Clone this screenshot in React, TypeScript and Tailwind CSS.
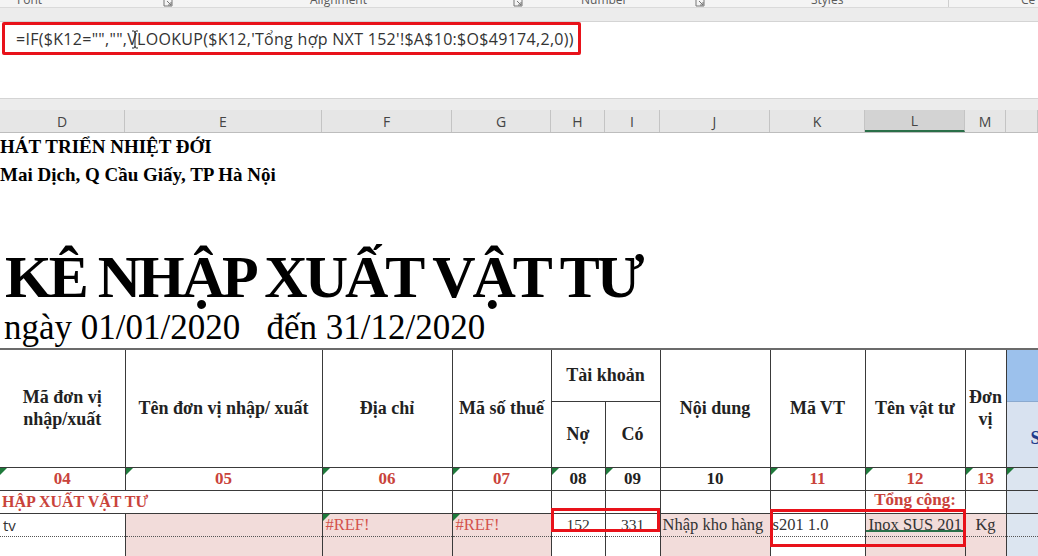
import React from "react";

const serif = "font-['Liberation_Serif',serif]";
const sans = "font-['Open_Sans',sans-serif]";
const vr = "border-r border-r-[#3a3a3a]";
const pink = "bg-[#f2dcda]";
const blueg = "bg-[#dce5f0]";
const dot = "border-b border-dotted border-b-[#555]";
const solidB = "border-b border-b-[#3a3a3a]";

function Tri() {
  return (
    <span className="absolute left-0 top-0 w-0 h-0 border-t-[7px] border-t-[#1e7a3b] border-r-[7px] border-r-transparent" />
  );
}

function Launcher() {
  return (
    <svg width="10" height="10" viewBox="0 0 10 10" className="inline-block">
      <path d="M1 1 H9 V9 H1 Z" fill="none" stroke="#777" strokeWidth="1" />
      <path d="M4 4 L8 8 M8 5 V8 H5" fill="none" stroke="#777" strokeWidth="1" />
    </svg>
  );
}

export default function App() {
  const colHead: [string, string, string][] = [
    ["D", "w-[125px]", ""],
    ["E", "w-[197px]", ""],
    ["F", "w-[130px]", ""],
    ["G", "w-[99px]", ""],
    ["H", "w-[54px]", ""],
    ["I", "w-[55px]", ""],
    ["J", "w-[110px]", ""],
    ["K", "w-[95px]", ""],
    ["L", "w-[100px]", "bg-[#d3d3d3] border-b-2 border-b-[#2a6f48]"],
    ["M", "w-[41px]", ""],
    ["", "w-[32px]", ""],
  ];

  return (
    <div className="relative w-[1038px] h-[556px] overflow-hidden bg-white">
      {/* ribbon group labels (cut by the frame, as in the capture) */}
      <div className={`h-[8px] overflow-hidden bg-[#f4f4f4] border-b border-b-[#dadada] ${sans} text-[12px] text-[#5a5a5a]`}>
        <div className="flex items-start -mt-[6px] leading-[12px] whitespace-nowrap">
          <span className="w-[163px] pl-[17px]">Font</span>
          <span className="w-[147px] pt-[1px]"><Launcher /></span>
          <span className="w-[203px]">Alignment</span>
          <span className="w-[68px] pt-[1px]"><Launcher /></span>
          <span className="w-[114px]">Number</span>
          <span className="w-[116px] pt-[1px]"><Launcher /></span>
          <span className="w-[137px]">Styles</span>
          <span className="w-[73px] border-l border-l-[#cfcfcf] h-[14px]"></span>
          <span>Ce</span>
        </div>
      </div>
      <div className="h-[13px] bg-[#ececec]" />

      {/* formula bar */}
      <div className="relative h-[78px] bg-white border-y border-y-[#d4d4d4] pl-[2px]">
        <div className={`w-[579px] h-[33px] border-[3px] border-[#e8121a] rounded-[2px] flex items-center pl-[11px] ${sans} text-[16px] tracking-[0.3px] text-[#333] whitespace-nowrap`}>
          =IF($K12="","",VLOOKUP($K12,'Tổng hợp NXT 152'!$A$10:$O$49174,2,0))
        </div>
        <svg className="absolute left-[131px] top-[8px]" width="8" height="19" viewBox="0 0 8 19">
          <path d="M1 1 H3 Q4 1 4 3 V16 Q4 18 3 18 H1 M7 1 H5 Q4 1 4 3 M4 16 Q4 18 5 18 H7" fill="none" stroke="#222" strokeWidth="1" />
        </svg>
      </div>
      <div className="h-[11px] bg-[#ececec]" />

      {/* column headers */}
      <div className={`flex h-[23px] bg-[#e6e6e6] border-b border-b-[#bdbdbd] ${sans} text-[14px] text-[#444]`}>
        {colHead.map(([l, w, extra], i) => (
          <div key={i} className={`${w} ${extra} flex items-center justify-center border-r border-r-[#c4c4c4] leading-none pt-[2px]`}>
            {l}
          </div>
        ))}
      </div>

      {/* sheet rows above table */}
      <div className={`${serif} font-bold text-black`}>
        <div className="h-[28px] leading-[28px] text-[19px] whitespace-nowrap">HÁT TRIỂN NHIỆT ĐỚI</div>
        <div className="h-[28px] leading-[28px] text-[19px] whitespace-nowrap">Mai Dịch, Q Cầu Giấy, TP Hà Nội</div>
        <div className="h-[58px]" />
        <div className="h-[60px] leading-[60px] text-[60px] pl-[5px] tracking-[-3px] whitespace-nowrap">KÊ NHẬP XUẤT VẬT TƯ</div>
        <div className="h-[41px] pt-[4px] leading-[34px] text-[35px] font-normal pl-[4px] whitespace-pre">ngày 01/01/2020   đến 31/12/2020</div>
      </div>

      {/* table */}
      <table className={`table-fixed border-collapse w-[1038px] ${serif} text-[#222]`}>
        <colgroup>
          <col className="w-[125px]" />
          <col className="w-[197px]" />
          <col className="w-[130px]" />
          <col className="w-[99px]" />
          <col className="w-[54px]" />
          <col className="w-[55px]" />
          <col className="w-[110px]" />
          <col className="w-[95px]" />
          <col className="w-[100px]" />
          <col className="w-[41px]" />
          <col className="w-[32px]" />
        </colgroup>
        <tbody className="font-bold text-[18px] leading-[22px]">
          <tr className="h-[52px] border-t-2 border-t-[#6b6b6b]">
            <td rowSpan={2} className={`${vr} text-center`}>Mã đơn vị<br />nhập/xuất</td>
            <td rowSpan={2} className={`${vr} text-center`}>Tên đơn vị nhập/ xuất</td>
            <td rowSpan={2} className={`${vr} text-center`}>Địa chỉ</td>
            <td rowSpan={2} className={`${vr} text-center whitespace-nowrap`}>Mã số thuế</td>
            <td colSpan={2} className={`${vr} ${solidB} text-center`}>Tài khoản</td>
            <td rowSpan={2} className={`${vr} text-center`}>Nội dung</td>
            <td rowSpan={2} className={`${vr} text-center`}>Mã VT</td>
            <td rowSpan={2} className={`${vr} text-center whitespace-nowrap`}>Tên vật tư</td>
            <td rowSpan={2} className={`${vr} text-center`}>Đơn<br />vị</td>
            <td className="bg-[#9cc1ec] border-b border-b-[#8aa9cf]" />
          </tr>
          <tr className="h-[66px]">
            <td className={`${vr} text-center`}>Nợ</td>
            <td className={`${vr} text-center`}>Có</td>
            <td className="bg-[#d8e2f0] text-[#1f3a8a] pl-[24px] overflow-hidden whitespace-nowrap pt-[8px]">S</td>
          </tr>

          {/* number row */}
          <tr className="h-[23px] border-t border-t-[#3a3a3a] border-b border-b-[#3a3a3a] text-center text-[17px]">
            <td className={`relative ${vr} text-[#c9433b]`}><Tri />04</td>
            <td className={`relative ${vr} text-[#c9433b]`}><Tri />05</td>
            <td className={`relative ${vr} text-[#c9433b]`}><Tri />06</td>
            <td className={`relative ${vr} text-[#c9433b]`}><Tri />07</td>
            <td className={`relative ${vr}`}><Tri />08</td>
            <td className={`relative ${vr}`}><Tri />09</td>
            <td className={`relative ${vr}`}>10</td>
            <td className={`relative ${vr} text-[#c9433b]`}><Tri />11</td>
            <td className={`relative ${vr} text-[#c9433b]`}><Tri />12</td>
            <td className={`relative ${vr} text-[#c9433b]`}><Tri />13</td>
            <td className={`relative ${blueg}`}><Tri /></td>
          </tr>

          {/* group row */}
          <tr className={`h-[21px] ${solidB}`}>
            <td colSpan={2} className={`${vr} text-[#c9433b] text-[16px] pl-[2px] whitespace-nowrap`}>HẬP XUẤT VẬT TƯ</td>
            <td className={vr} />
            <td className={vr} />
            <td className={vr} />
            <td className={vr} />
            <td className={vr} />
            <td className={vr} />
            <td className={`${vr} text-[#c9433b] text-[17px] text-center whitespace-nowrap align-top leading-[18px]`}>Tổng cộng:</td>
            <td className={vr} />
            <td className={blueg} />
          </tr>

          {/* data row */}
          <tr className={`h-[22px] ${dot} font-normal text-[16.5px] text-[#333]`}>
            <td className={`${vr} ${sans} text-[15px] pl-[3px]`}>tv</td>
            <td className={`${vr} ${pink}`} />
            <td className={`relative ${vr} ${pink} text-[#d4534c] pl-[3px]`}><Tri />#REF!</td>
            <td className={`relative ${vr} ${pink} text-[#d4534c] pl-[3px]`}><Tri />#REF!</td>
            <td className={`${vr} text-center text-[15.5px]`}>152</td>
            <td className={`${vr} text-center text-[15.5px]`}>331</td>
            <td className={`${vr} ${pink} pl-[2px] whitespace-nowrap`}>Nhập kho hàng</td>
            <td className={`${vr} pl-[2px] whitespace-nowrap`}>s201 1.0</td>
            <td className={`${vr} ${pink} pl-[3px] whitespace-nowrap`}>Inox SUS 201</td>
            <td className={`${vr} ${pink} text-center`}>Kg</td>
            <td className={blueg} />
          </tr>

          {/* empty rows */}
          <tr className={`h-[22px] ${dot}`}>
            <td className={vr} />
            <td className={`${vr} ${pink}`} />
            <td className={`${vr} ${pink}`} />
            <td className={`${vr} ${pink}`} />
            <td className={vr} />
            <td className={vr} />
            <td className={`${vr} ${pink}`} />
            <td className={vr} />
            <td className={`${vr} ${pink}`} />
            <td className={`${vr} ${pink}`} />
            <td className={blueg} />
          </tr>
          <tr className="h-[22px]">
            <td className={vr} />
            <td className={`${vr} ${pink}`} />
            <td className={`${vr} ${pink}`} />
            <td className={`${vr} ${pink}`} />
            <td className={vr} />
            <td className={vr} />
            <td className={`${vr} ${pink}`} />
            <td className={vr} />
            <td className={`${vr} ${pink}`} />
            <td className={`${vr} ${pink}`} />
            <td className={blueg} />
          </tr>
        </tbody>
      </table>

      {/* selection + annotation overlays */}
      <div className="absolute left-[866px] top-[510px] w-[99px] h-[22px] border-b-2 border-b-[#2a6f48]" />
      <div className="absolute left-[551px] top-[508px] w-[109px] h-[24px] border-[3px] border-[#e8121a]" />
      <div className="absolute left-[770px] top-[509px] w-[196px] h-[38px] border-[3px] border-[#e8121a]" />
    </div>
  );
}
